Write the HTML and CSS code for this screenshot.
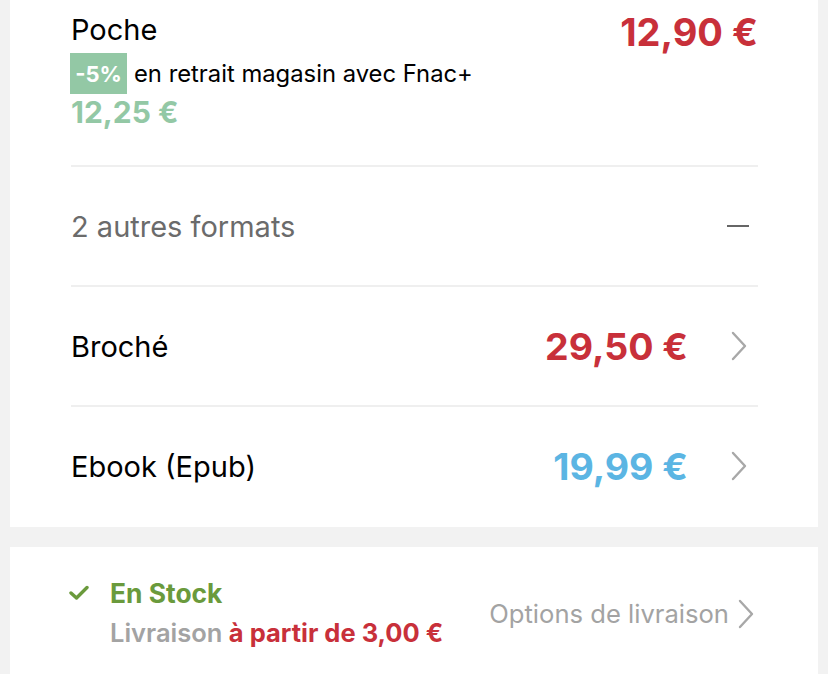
FILE: index.html
```html
<!DOCTYPE html>
<html lang="fr">
<head>
<meta charset="utf-8">
<title>Formats</title>
<link rel="stylesheet" href="styles.css">
</head>
<body>
<section class="card formats">
  <div class="main">
    <div class="main-left">
      <div class="format-name">Poche</div>
      <div class="promo">
        <span class="badge">-5%</span>
        <span class="promo-text">en retrait magasin avec Fnac+</span>
      </div>
      <div class="promo-price">12,25 €</div>
    </div>
    <div class="main-price">12,90 €</div>
  </div>
  <div class="row toggle">
    <span class="toggle-label">2 autres formats</span>
    <span class="minus"></span>
  </div>
  <div class="row">
    <span class="row-label">Broché</span>
    <span class="row-right">
      <span class="price red">29,50 €</span>
      <svg class="chev" width="18" height="30" viewBox="0 0 18 30"><path d="M3 2 L15 15 L3 28" fill="none" stroke="#a8a8a8" stroke-width="2.4" stroke-linecap="round" stroke-linejoin="round"/></svg>
    </span>
  </div>
  <div class="row last">
    <span class="row-label">Ebook (Epub)</span>
    <span class="row-right">
      <span class="price blue">19,99 €</span>
      <svg class="chev" width="18" height="30" viewBox="0 0 18 30"><path d="M3 2 L15 15 L3 28" fill="none" stroke="#a8a8a8" stroke-width="2.4" stroke-linecap="round" stroke-linejoin="round"/></svg>
    </span>
  </div>
</section>
<section class="card delivery">
  <div class="stock">
    <svg class="check" width="20" height="16" viewBox="0 0 20 16"><path d="M2 8 L7.5 13 L18 2.5" fill="none" stroke="#6a9a3c" stroke-width="3.4" stroke-linecap="round" stroke-linejoin="round"/></svg>
    <div class="stock-text">
      <div class="stock-status">En Stock</div>
      <div class="stock-ship"><span class="ship-label">Livraison</span> <span class="ship-price">à partir de 3,00 €</span></div>
    </div>
  </div>
  <div class="options">
    <span class="options-label">Options de livraison</span>
    <svg class="chev" width="18" height="30" viewBox="0 0 18 30"><path d="M3 2 L15 15 L3 28" fill="none" stroke="#a8a8a8" stroke-width="2.4" stroke-linecap="round" stroke-linejoin="round"/></svg>
  </div>
</section>
</body>
</html>
```
FILE: styles.css
```css
* { box-sizing: border-box; }
html, body { margin: 0; padding: 0; }
body {
  background: #f2f2f2;
  font-family: Inter, "Noto Sans", "Liberation Sans", sans-serif;
  color: #000;
  width: 828px;
  height: 674px;
  overflow: hidden;
}
.card {
  background: #fff;
  margin: 0 10px;
  padding: 0 60px 0 61px;
}
.formats { height: 527px; }
.main {
  height: 167px;
  border-bottom: 2px solid #efefef;
  display: flex;
  justify-content: space-between;
  align-items: flex-start;
  padding-top: 12px;
}
.main-left { display: flex; flex-direction: column; }
.format-name { font-size: 29px; line-height: 35px; }
.promo { display: flex; align-items: center; margin-top: 6px; }
.badge {
  background: #93c8a5;
  color: #fff;
  font-weight: 700;
  font-size: 22px;
  height: 41px;
  width: 57px;
  display: flex;
  align-items: center;
  justify-content: center;
  margin-left: -1px;
}
.promo-text { font-size: 23.8px; margin-left: 7px; }
.promo-price { color: #93c8a5; font-weight: 700; font-size: 30px; line-height: 32px; margin-top: 2px; }
.main-price { color: #c8303a; font-weight: 700; font-size: 38px; line-height: 42px; margin-top: -1px; }
.row {
  height: 120px;
  border-bottom: 2px solid #efefef;
  display: flex;
  align-items: center;
  justify-content: space-between;
}
.row.last { height: 118px; border-bottom: none; }
.toggle-label { font-size: 29px; color: #6b6b6b; }
.minus { width: 22px; height: 2px; background: #666; margin-right: 9px; }
.row-label { font-size: 29px; }
.row-right { display: flex; align-items: center; gap: 42px; margin-right: 10px; }
.price { font-weight: 700; font-size: 37.5px; }
.red { color: #c8303a; }
.blue { color: #5bb5e3; }
.chev { display: block; }
.delivery {
  margin-top: 20px;
  height: 127px;
  display: flex;
  justify-content: space-between;
  align-items: flex-start;
  padding-top: 29px;
}
.stock { display: flex; align-items: flex-start; }
.check { margin-top: 9px; margin-left: -2px; }
.stock-text { margin-left: 21px; }
.stock-status { color: #6a9a3c; font-weight: 700; font-size: 26.4px; line-height: 34px; }
.stock-ship { font-size: 25.5px; font-weight: 600; line-height: 32px; margin-top: 7px; }
.ship-label { color: #a3a3a3; }
.ship-price { color: #c8303a; font-weight: 700; }
.options { display: flex; align-items: center; gap: 8px; margin-top: 22px; margin-right: 3px; }
.options-label { font-size: 25.6px; color: #a3a3a3; }
```
